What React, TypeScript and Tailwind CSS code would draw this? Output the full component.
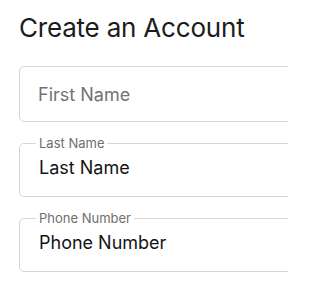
import React from 'react';

const fields = [
  { label: 'Last Name', value: 'Last Name' },
  { label: 'Phone Number', value: 'Phone Number' },
];

const App = () => {
  return (
    <div className="w-[288px] h-[288px] overflow-hidden bg-white font-['Inter',sans-serif]">
      <div className="pl-[19px] pt-[12px]">
        <h1 className="text-[26px] leading-[32px] text-[#1c1c1c] tracking-[-0.2px]">Create an Account</h1>
        <div className="mt-[22px] w-[310px] flex flex-col gap-[13px]">
          <div className="h-[56px] border border-[#d6d6d6] rounded-[5px] flex items-center pl-[18px] text-[18px] text-[#737373]">
            First Name
          </div>
          {fields.map((field, index) => (
            <fieldset key={index} className="h-[62px] border border-[#d6d6d6] rounded-[5px] pl-[16px] m-0 min-w-0">
              <legend className="px-[3px] text-[13px] leading-[16px] text-[#6e6e6e]">{field.label}</legend>
              <div className="mt-[5px] pl-[3px] text-[18px] leading-[24px] text-[#141414]">{field.value}</div>
            </fieldset>
          ))}
        </div>
      </div>
    </div>
  );
};

export default App;
